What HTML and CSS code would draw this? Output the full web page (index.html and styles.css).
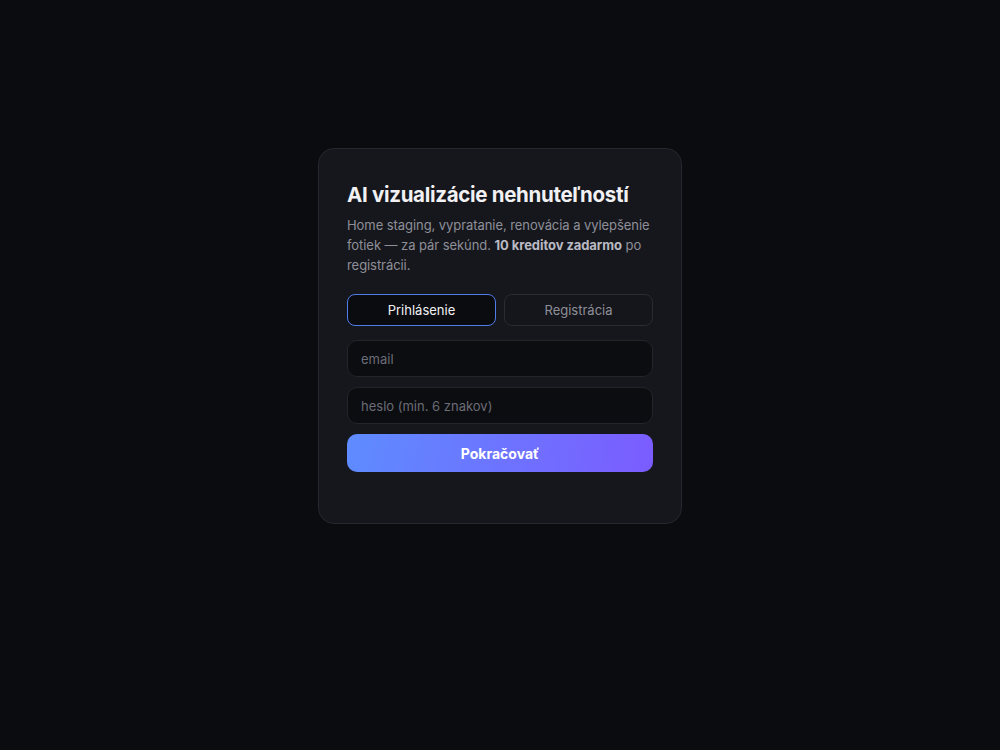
FILE: index.html
```html
<!DOCTYPE html>
<html lang="sk">
<head>
<meta charset="utf-8">
<title>AI vizualizácie nehnuteľností</title>
<link rel="stylesheet" href="styles.css">
</head>
<body>
<main class="page">
  <section class="card">
    <h1 class="title">AI vizualizácie nehnuteľností</h1>
    <p class="desc">Home staging, vypratanie, renovácia a vylepšenie fotiek — za pár sekúnd. <strong>10 kreditov zadarmo</strong> po registrácii.</p>
    <div class="tabs">
      <button class="tab tab-active">Prihlásenie</button>
      <button class="tab">Registrácia</button>
    </div>
    <form class="form">
      <input class="field" type="email" placeholder="email">
      <input class="field" type="password" placeholder="heslo (min. 6 znakov)">
      <button class="submit" type="button">Pokračovať</button>
    </form>
  </section>
</main>
</body>
</html>
```
FILE: styles.css
```css
* { box-sizing: border-box; }
html, body { margin: 0; height: 100%; }
body {
  background: #0b0c10;
  font-family: Inter, "Noto Sans", sans-serif;
  color: #ececf1;
}
.page {
  min-height: 100vh;
  display: flex;
  justify-content: center;
  padding-top: 148px;
}
.card {
  width: 364px;
  height: 376px;
  background: #16171c;
  border: 1px solid #26272e;
  border-radius: 16px;
  padding: 28px 28px;
  align-self: flex-start;
}
.title {
  margin: 4px 0 0;
  font-size: 20.5px;
  font-weight: 700;
  letter-spacing: -0.015em;
  line-height: 28px;
  color: #f1f1f4;
}
.desc {
  margin: 6px 0 0;
  font-size: 13px;
  letter-spacing: -0.005em;
  line-height: 20px;
  color: #8e8f99;
}
.desc strong { color: #b9bac3; font-weight: 700; }
.tabs {
  display: grid;
  grid-template-columns: 1fr 1fr;
  gap: 8px;
  margin-top: 19px;
}
.tab {
  height: 32px;
  border-radius: 8px;
  border: 1px solid #2a2b33;
  background: #15161b;
  color: #8e8f99;
  font-family: inherit;
  font-size: 13px;
  padding: 0;
}
.tab-active {
  background: #0b0c10;
  border-color: #4f7ce8;
  color: #f1f1f4;
}
.form {
  display: flex;
  flex-direction: column;
  gap: 10px;
  margin-top: 14px;
}
.field {
  height: 37px;
  border-radius: 10px;
  border: 1px solid #23242b;
  background: #0c0d11;
  color: #ececf1;
  font-family: inherit;
  font-size: 13px;
  padding: 0 13px;
  outline: none;
}
.field::placeholder { color: #6b6c76; }
.submit {
  height: 38px;
  border: 0;
  border-radius: 10px;
  background: linear-gradient(100deg, #5e8cff, #7b5cff);
  color: #ffffff;
  font-family: inherit;
  font-size: 14px;
  font-weight: 700;
}
```
